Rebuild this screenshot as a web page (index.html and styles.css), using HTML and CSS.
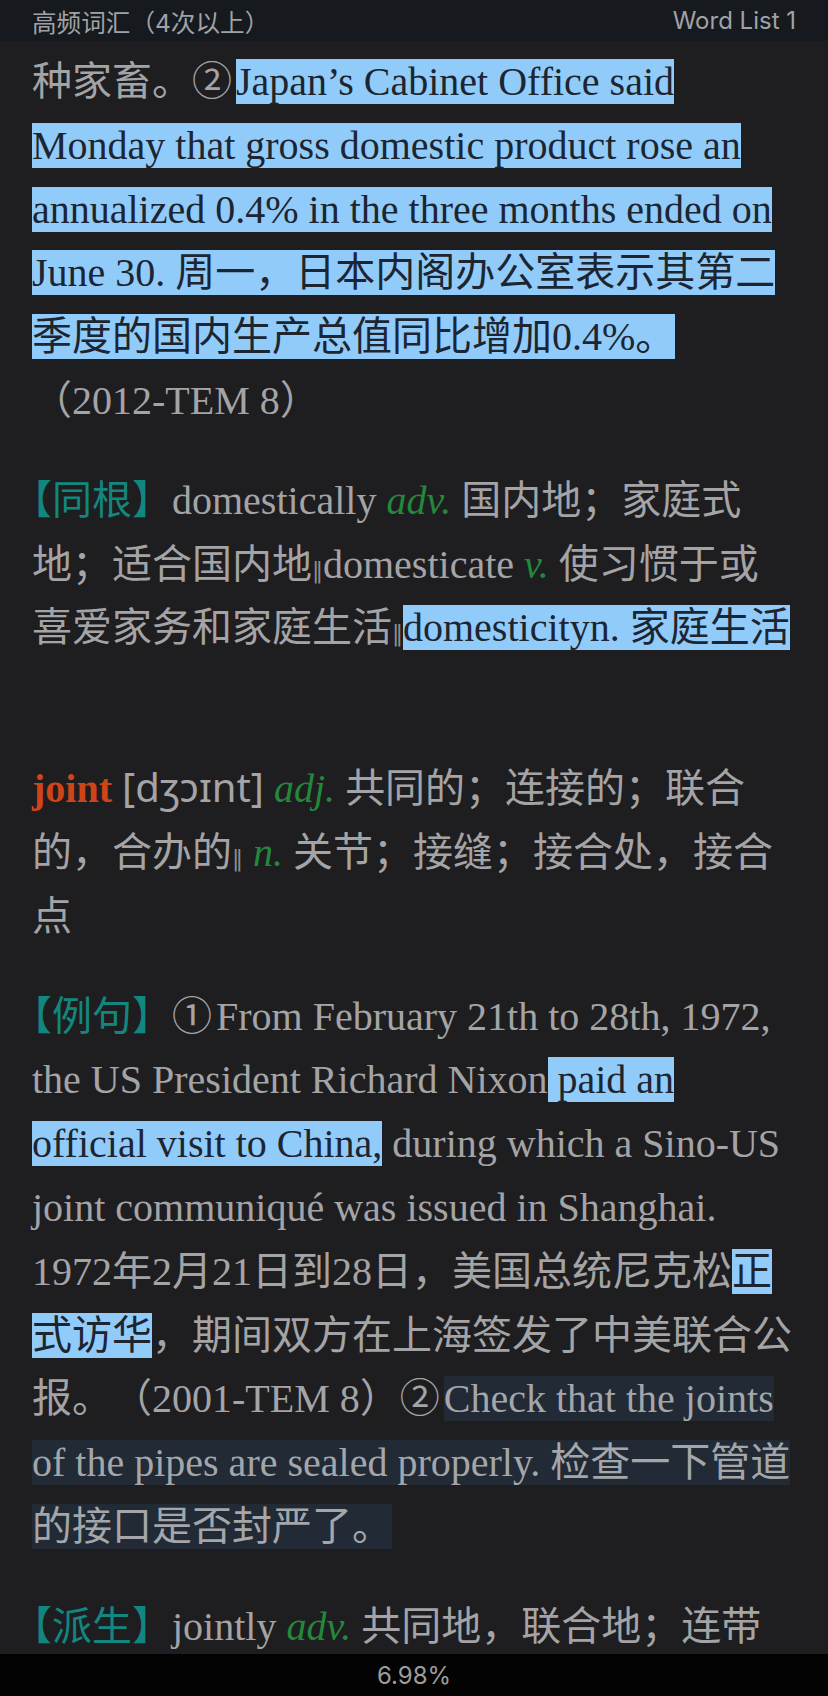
FILE: index.html
```html
<!DOCTYPE html>
<html lang="zh-CN">
<head>
<meta charset="utf-8">
<title>高频词汇</title>
<link rel="stylesheet" href="styles.css">
</head>
<body>
<div class="screen">
  <header class="topbar">
    <span class="topbar-title">高频词汇（4次以上）</span>
    <span class="topbar-list">Word List 1</span>
  </header>
  <main class="reader">
    <p class="para">种家畜。<span class="num">②</span><span class="hl">Japan’s Cabinet Office said Monday that gross domestic product rose an annualized 0.4% in the three months ended on June 30. 周一，日本内阁办公室表示其第二季度的国内生产总值同比增加0.4%。</span>（2012-TEM 8）</p>
    <p class="para"><span class="label"><span class="open">【</span>同根】</span>domestically <i class="pos">adv.</i> 国内地；家庭式地；适合国内地<span class="sep">‖</span>domesticate <i class="pos">v.</i> 使习惯于或喜爱家务和家庭生活<span class="sep">‖</span><span class="hl">domesticityn. 家庭生活</span></p>
    <p class="para entry"><b class="head">joint</b> <span class="ipa">[dʒɔɪnt]</span> <i class="pos">adj.</i> 共同的；连接的；联合的，合办的<span class="sep">‖</span> <i class="pos">n.</i> 关节；接缝；接合处，接合点</p>
    <p class="para"><span class="label"><span class="open">【</span>例句】</span><span class="num">①</span>From February 21th to 28th, 1972, the US President Richard Nixon<span class="hl"> paid an official visit to China,</span> during which a Sino-US joint communiqué was issued in Shanghai. 1972年2月21日到28日，美国总统尼克松<span class="hl">正式访华</span>，期间双方在上海签发了中美联合公报。（2001-TEM 8）<span class="num">②</span><span class="hl-dark">Check that the joints of the pipes are sealed properly. 检查一下管道的接口是否封严了。</span></p>
    <p class="para"><span class="label"><span class="open">【</span>派生】</span>jointly <i class="pos">adv.</i> 共同地，联合地；连带地</p>
  </main>
  <footer class="progress">6.98%</footer>
</div>
</body>
</html>
```
FILE: styles.css
```css
html, body {
  margin: 0;
  padding: 0;
  background: #1e1e20;
}

.screen {
  width: 828px;
  height: 1696px;
  display: flex;
  flex-direction: column;
  overflow: hidden;
  background: #1e1e20;
  text-spacing-trim: space-all;
}

.topbar {
  height: 41px;
  flex: 0 0 41px;
  background: #16191d;
  display: flex;
  align-items: center;
  justify-content: space-between;
  padding: 0 32px 0 32px;
  font-family: "Inter", "Noto Sans CJK SC", sans-serif;
  font-size: 24px;
  color: #a0a3a6;
}

.topbar-title {
  font-size: 24.6px;
}

.topbar-list {
  font-size: 24px;
}

.reader {
  flex: 1 1 auto;
  overflow: hidden;
  padding: 9px 34px 0 32px;
  font-family: "Liberation Serif", "Noto Sans CJK SC", serif;
  font-size: 40px;
  line-height: 63.8px;
  color: #a4a4a7;
  text-spacing-trim: space-all;
}

.para {
  margin: 0 0 33px 0;
}

.entry {
  margin-top: 95px;
}

.num {
  padding-right: 4px;
}

.hl {
  background: #91cbfa;
  color: #1c2530;
}

.hl-dark {
  background: #212a35;
  color: #a4a6aa;
}

.label {
  color: #12877f;
  font-family: "Noto Sans CJK SC", sans-serif;
}

.open {
  font-feature-settings: "halt" 1;
}

.pos {
  color: #24883b;
  font-style: italic;
}

.head {
  color: #d0441a;
  font-weight: bold;
}

.ipa {
  font-family: "Noto Sans", "DejaVu Sans", sans-serif;
}

.sep {
  font-family: "DejaVu Serif", "DejaVu Sans", serif;
  font-size: 22px;
  line-height: 1;
  color: #8e8e91;
}

.progress {
  flex: 0 0 42px;
  height: 42px;
  background: #030303;
  display: flex;
  align-items: center;
  justify-content: center;
  font-family: "Inter", "Noto Sans", sans-serif;
  font-size: 24px;
  color: #9c9c9c;
}
```
